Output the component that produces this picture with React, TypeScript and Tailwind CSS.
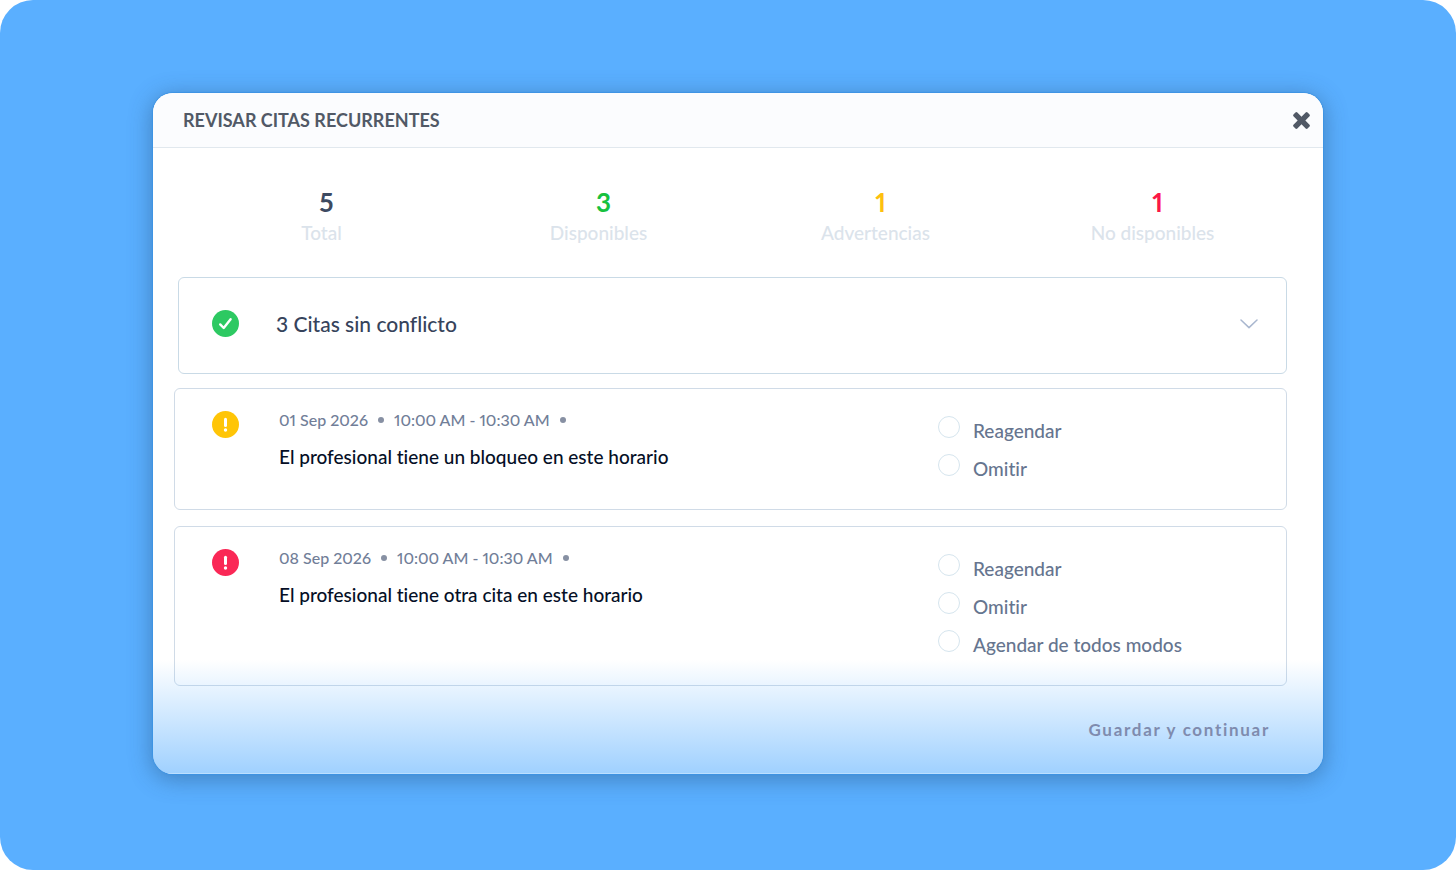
import { useState } from "react";

type Conflict = {
  id: string;
  date: string;
  time: string;
  message: string;
  severity: "warning" | "error";
  options: string[];
};

const stats = [
  { label: "Total", value: 5, color: "text-[#3d4a61]" },
  { label: "Disponibles", value: 3, color: "text-[#17c13e]" },
  { label: "Advertencias", value: 1, color: "text-[#fdc00f]" },
  { label: "No disponibles", value: 1, color: "text-[#fb1747]" },
];

const conflicts: Conflict[] = [
  {
    id: "cita-1",
    date: "01 Sep 2026",
    time: "10:00 AM - 10:30 AM",
    message: "El profesional tiene un bloqueo en este horario",
    severity: "warning",
    options: ["Reagendar", "Omitir"],
  },
  {
    id: "cita-2",
    date: "08 Sep 2026",
    time: "10:00 AM - 10:30 AM",
    message: "El profesional tiene otra cita en este horario",
    severity: "error",
    options: ["Reagendar", "Omitir", "Agendar de todos modos"],
  },
];

function CloseIcon() {
  return (
    <svg className="size-[17px]" viewBox="296 360 1200 1200" fill="currentColor" aria-hidden="true">
      <path d="M1490 1322q0 40-28 68l-136 136q-28 28-68 28t-68-28l-294-294-294 294q-28 28-68 28t-68-28l-136-136q-28-28-28-68t28-68l294-294-294-294q-28-28-28-68t28-68l136-136q28-28 68-28t68 28l294 294 294-294q28-28 68-28t68 28l136 136q28 28 28 68t-28 68l-294 294 294 294q28 28 28 68z" />
    </svg>
  );
}

function CheckIcon() {
  return (
    <svg className="size-[27px] shrink-0" viewBox="0 0 27 27" aria-hidden="true">
      <circle cx="13.5" cy="13.5" r="13.5" fill="#2dc962" />
      <path d="M8.2 14.4l3.5 3.6 6.9-8.7" fill="none" stroke="#fff" strokeWidth="2.4" strokeLinecap="round" strokeLinejoin="round" />
    </svg>
  );
}

function AlertIcon({ severity }: { severity: Conflict["severity"] }) {
  return (
    <svg className="size-[27px] shrink-0" viewBox="0 0 27 27" aria-hidden="true">
      <circle cx="13.5" cy="13.5" r="13.5" fill={severity === "warning" ? "#ffc507" : "#fa2856"} />
      <path d="M13.5 8.3v6.2" stroke="#fff" strokeWidth="3" strokeLinecap="round" />
      <circle cx="13.5" cy="19" r="1.7" fill="#fff" />
    </svg>
  );
}

function Dot() {
  return <span className="size-1.5 rounded-full bg-[#8790a3]" />;
}

function ConflictCard({ conflict }: { conflict: Conflict }) {
  const [choice, setChoice] = useState("");

  return (
    <article className="flex items-start rounded-md border border-[#d0dbe7] pt-[22px] pb-[25px] pl-[37px]">
      <AlertIcon severity={conflict.severity} />
      <div className="ml-10 min-w-0 flex-1">
        <div className="flex items-center gap-2.5 text-[16px] leading-[18px] text-[#717e98] proportional-nums">
          <span>{conflict.date}</span>
          <Dot />
          <span>{conflict.time}</span>
          <Dot />
        </div>
        <p className="mt-4 text-[19px] leading-6 text-[#050f26]">{conflict.message}</p>
      </div>
      <fieldset className="flex w-[348px] shrink-0 flex-col gap-2 pt-[5px]" aria-label={conflict.message}>
        {conflict.options.map((option) => (
          <label key={option} className="flex cursor-pointer items-start gap-[13px] text-[19px] leading-[30px] text-[#66758f]">
            <input
              type="radio"
              name={conflict.id}
              value={option}
              checked={choice === option}
              onChange={() => setChoice(option)}
              className="size-[22px] appearance-none rounded-full border border-[#d6e5ee] checked:border-[6px] checked:border-[#5aafff]"
            />
            {option}
          </label>
        ))}
      </fieldset>
    </article>
  );
}

export default function App() {
  const [open, setOpen] = useState(false);

  return (
    <main className="min-h-screen rounded-[33px] bg-[#5aafff] pt-[93px] pr-[133px] pb-24 pl-[153px] font-['Lato',sans-serif] font-medium [font-variant-ligatures:no-common-ligatures]">
      <section
        role="dialog"
        aria-labelledby="dialog-title"
        className="relative overflow-hidden rounded-[20px] bg-white shadow-[0_0_1px_1px_#3e94e4,0_4px_22px_2px_rgba(40,80,120,0.45)]"
      >
        <header className="flex h-[55px] items-center justify-between border-b border-[#e1e8ee] bg-[#fbfcfe] pr-[13px] pl-[30px] text-[#515966]">
          <h1 id="dialog-title" className="text-[18px] leading-6 font-bold">
            REVISAR CITAS RECURRENTES
          </h1>
          <button type="button" aria-label="Cerrar" className="cursor-pointer">
            <CloseIcon />
          </button>
        </header>

        <div className="grid grid-cols-4 pt-10 pr-8 pl-[30px] text-center">
          {stats.map((stat) => (
            <div key={stat.label}>
              <p className={`pl-2.5 text-[26px] leading-7 font-bold proportional-nums ${stat.color}`}>{stat.value}</p>
              <p className="mt-[5px] text-[19px] leading-6 text-[#dbe3eb]">{stat.label}</p>
            </div>
          ))}
        </div>

        <div className="mt-8 pr-9 pl-[25px]">
          <button
            type="button"
            aria-expanded={open}
            onClick={() => setOpen(!open)}
            className="flex h-[97px] w-full cursor-pointer items-center rounded-md border border-[#c9dae6] pr-7 pb-1 pl-[33px] text-left"
          >
            <CheckIcon />
            <span className="ml-[37px] flex-1 text-[21px] leading-6 text-[#36435b]">3 Citas sin conflicto</span>
            <svg className="h-[10px] w-[18px]" viewBox="0 0 18 10" fill="none" stroke="#a9b7cf" strokeWidth="1.5" aria-hidden="true">
              <path d="M1 1l8 7.6L17 1" strokeLinecap="round" strokeLinejoin="round" />
            </svg>
          </button>
        </div>

        <div className="mt-3.5 flex flex-col gap-4 pr-9 pl-[21px]">
          {conflicts.map((conflict) => (
            <ConflictCard key={conflict.id} conflict={conflict} />
          ))}
        </div>

        <div className="pointer-events-none absolute inset-x-0 bottom-0 h-[114px] border-b border-white/30 bg-linear-to-b from-[#5aafff]/0 to-[#5aafff]/58 bg-origin-border" />

        <footer className="relative flex h-[88px] items-center justify-end pr-[53px]">
          <button type="button" className="cursor-pointer text-[17px] leading-6 font-bold tracking-widest text-[#7f8bae]">
            Guardar y continuar
          </button>
        </footer>
      </section>
    </main>
  );
}
